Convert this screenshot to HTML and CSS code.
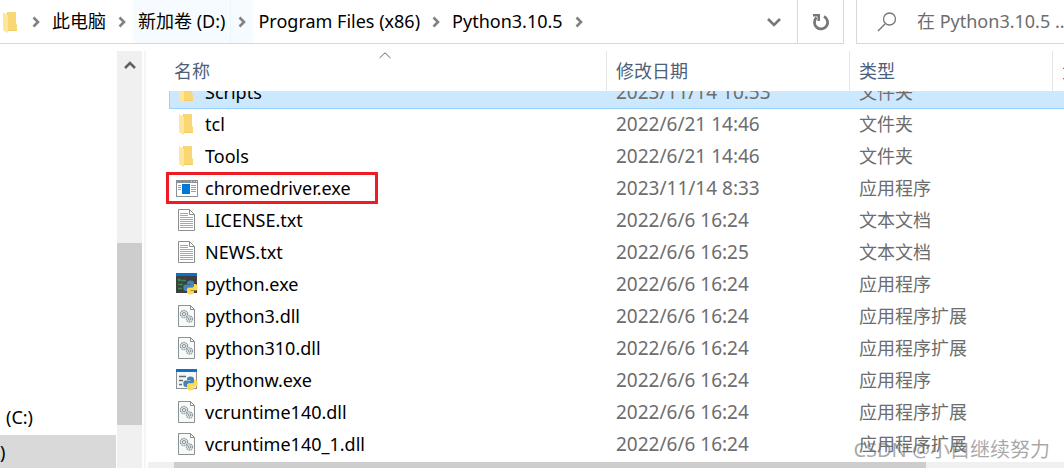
FILE: index.html
```
<!DOCTYPE html>
<html lang="zh-CN">
  <head>
    <meta charset="UTF-8" />
    <title>Python3.10.5</title>
    <link rel="stylesheet" href="styles.css" />
  </head>
  <body>
    <!-- Icons -->
    <svg class="sprite" width="0" height="0" aria-hidden="true">
      <symbol id="chevron" viewBox="0 0 8 12">
        <path d="M1.5 1.5 6 6 1.5 10.5" fill="none" stroke="#818181" stroke-width="2.6" />
      </symbol>
      <symbol id="folder" viewBox="0 0 22 22">
        <path d="M7 1h9v12l1 1v6H5z" fill="#f5cd62" />
        <path d="M8 1h8v12l1 1v5H8z" fill="#f8d775" />
        <path d="M3 1l5 3v18l-4-2-1-1z" fill="#ffe69b" />
      </symbol>
      <symbol id="app" viewBox="0 0 22 22">
        <rect x=".5" y="3.5" width="21" height="16" fill="#fff" stroke="#8b9094" />
        <rect x="0" y="3" width="22" height="3" fill="#8b9094" />
        <path d="M15 4.5h1M17.5 4.5h1M20 4.5h1" stroke="#e8eaeb" />
        <rect x="6" y="7" width="8" height="10" fill="#0078d7" />
        <path d="M2 8.5h3M2 10.5h3M2 12.5h3M15 8.5h5M15 10.5h5M15 12.5h5M15 14.5h5" stroke="#9a9fa3" />
      </symbol>
      <symbol id="text" viewBox="0 0 22 22">
        <path d="M2.5.5h11l5 5v16h-16z" fill="#fff" stroke="#8b8f91" />
        <path d="M13.5.5v5h5" fill="none" stroke="#8b8f91" />
        <path d="M4 4.5h8M4 6.5h8M4 8.5h13M4 10.5h13M4 12.5h13M4 14.5h13M4 16.5h13M4 18.5h13" stroke="#a3a7a9" />
      </symbol>
      <symbol id="dll" viewBox="0 0 22 22">
        <path d="M2.5.5h12l4 4v17h-16z" fill="#f8f9f9" stroke="#8b8f91" />
        <path d="M14.5.5v4h4" fill="none" stroke="#8b8f91" />
        <circle cx="8" cy="9" r="3.5" fill="none" stroke="#8d979f" stroke-width="1.5" stroke-dasharray="1.5 .7" />
        <circle cx="8" cy="9" r="1.7" fill="#dfe4e7" stroke="#8d979f" />
        <circle cx="13.5" cy="14" r="3" fill="none" stroke="#8d979f" stroke-width="1.4" stroke-dasharray="1.4 .7" />
        <circle cx="13.5" cy="14" r="1.3" fill="#dfe4e7" stroke="#8d979f" />
      </symbol>
      <symbol id="python" viewBox="0 0 22 22">
        <rect width="21" height="20" fill="#3c4043" />
        <rect width="21" height="3" fill="#0a70c8" />
        <path d="M2 6l2 1-2 1M5 7.5h5M2 11.5h5M2 15.5h4" fill="none" stroke="#398b43" stroke-width="1.5" />
        <g transform="translate(7 7)">
          <path d="M4 3Q4 .5 7.500 .5T11 3v3Q11 7.500 9.500 7.500H6Q4 7.500 4 9.500v1.500H3Q.3 11 .3 7.500T3 4.500h4.500V4H4z" fill="#4584b6" />
          <path d="M4 3Q4 .5 7.500 .5T11 3v3Q11 7.500 9.500 7.500H6Q4 7.500 4 9.500v1.500H3Q.3 11 .3 7.500T3 4.500h4.500V4H4z" fill="#ffd94a" transform="rotate(180 7.5 7.5)" />
        </g>
      </symbol>
      <symbol id="pythonw" viewBox="0 0 22 22">
        <rect x=".5" y=".5" width="20" height="19" fill="#f5f6f7" stroke="#8b9094" />
        <rect width="21" height="3" fill="#0a70c8" />
        <path d="M3 7.5h7M3 11.5h4M3 15.5h3" stroke="#646a70" stroke-width="1.5" />
        <g transform="translate(7 7)">
          <path d="M4 3Q4 .5 7.500 .5T11 3v3Q11 7.500 9.500 7.500H6Q4 7.500 4 9.500v1.500H3Q.3 11 .3 7.500T3 4.500h4.500V4H4z" fill="#4584b6" />
          <path d="M4 3Q4 .5 7.500 .5T11 3v3Q11 7.500 9.500 7.500H6Q4 7.500 4 9.500v1.500H3Q.3 11 .3 7.500T3 4.500h4.500V4H4z" fill="#ffd94a" transform="rotate(180 7.5 7.5)" />
        </g>
      </symbol>
    </svg>

    <!-- Address bar -->
    <header class="toolbar">
      <nav class="address">
        <svg class="icon address-icon"><use href="#folder" /></svg>
        <svg class="chevron"><use href="#chevron" /></svg>
        <button class="crumb">此电脑</button>
        <svg class="chevron"><use href="#chevron" /></svg>
        <span class="crumb-hover">
          <button class="crumb">新加卷 (D:)</button>
          <svg class="chevron"><use href="#chevron" /></svg>
        </span>
        <button class="crumb">Program Files (x86)</button>
        <svg class="chevron"><use href="#chevron" /></svg>
        <button class="crumb">Python3.10.5</button>
        <svg class="chevron"><use href="#chevron" /></svg>
        <button class="tool history" aria-label="历史记录">
          <svg width="14" height="10" viewBox="0 0 14 10">
            <path d="M1 2l6 6 6-6" fill="none" stroke="#777" stroke-width="2.6" />
          </svg>
        </button>
        <button class="tool refresh" aria-label="刷新">
          <svg width="18" height="18" viewBox="0 0 18 18">
            <path d="M12 3.4A6.6 6.6 0 1 1 4.5 4.5" fill="none" stroke="#777" stroke-width="2.8" />
            <path d="M1 1h7v7H5.5V3.5H1z" fill="#777" />
          </svg>
        </button>
      </nav>
      <label class="search">
        <svg width="20" height="20" viewBox="0 0 20 20" aria-hidden="true">
          <path d="M1 19l7-7" stroke="#777" stroke-width="1.5" />
          <circle cx="12.5" cy="7" r="6" fill="none" stroke="#777" stroke-width="1.3" />
        </svg>
        <input type="text" placeholder="在 Python3.10.5 ..." aria-label="搜索" />
      </label>
    </header>

    <main class="explorer">
      <!-- Drive tree -->
      <aside class="tree">
        <a class="tree-item" href="#">(C:)</a>
        <a class="tree-item tree-current" href="#">)</a>
      </aside>
      <div class="scroll-y">
        <svg width="12" height="9" viewBox="0 0 12 9">
          <path d="M1 7l5-5 5 5" fill="none" stroke="#606060" stroke-width="2.5" />
        </svg>
        <div class="thumb-y"></div>
      </div>
      <div class="splitter"></div>

      <!-- File list -->
      <section class="files">
        <table>
          <thead>
            <tr>
              <th>
                名称
                <svg class="sort" width="12" height="7" viewBox="0 0 12 7">
                  <path d="M.5 6 6 .8 11.5 6" fill="none" stroke="#666" />
                </svg>
              </th>
              <th>修改日期</th>
              <th>类型</th>
              <th>大小</th>
            </tr>
          </thead>
          <tbody>
            <tr class="selected">
              <td><svg class="icon"><use href="#folder" /></svg>Scripts</td>
              <td class="date">2023/11/14 10:53</td>
              <td>文件夹</td>
            </tr>
            <tr>
              <td><svg class="icon"><use href="#folder" /></svg>tcl</td>
              <td class="date">2022/6/21 14:46</td>
              <td>文件夹</td>
            </tr>
            <tr>
              <td><svg class="icon"><use href="#folder" /></svg>Tools</td>
              <td class="date">2022/6/21 14:46</td>
              <td>文件夹</td>
            </tr>
            <tr class="marked">
              <td><svg class="icon"><use href="#app" /></svg>chromedriver.exe</td>
              <td class="date">2023/11/14 8:33</td>
              <td>应用程序</td>
            </tr>
            <tr>
              <td><svg class="icon"><use href="#text" /></svg>LICENSE.txt</td>
              <td class="date">2022/6/6 16:24</td>
              <td>文本文档</td>
            </tr>
            <tr>
              <td><svg class="icon"><use href="#text" /></svg>NEWS.txt</td>
              <td class="date">2022/6/6 16:25</td>
              <td>文本文档</td>
            </tr>
            <tr>
              <td><svg class="icon"><use href="#python" /></svg>python.exe</td>
              <td class="date">2022/6/6 16:24</td>
              <td>应用程序</td>
            </tr>
            <tr>
              <td><svg class="icon"><use href="#dll" /></svg>python3.dll</td>
              <td class="date">2022/6/6 16:24</td>
              <td>应用程序扩展</td>
            </tr>
            <tr>
              <td><svg class="icon"><use href="#dll" /></svg>python310.dll</td>
              <td class="date">2022/6/6 16:24</td>
              <td>应用程序扩展</td>
            </tr>
            <tr>
              <td><svg class="icon"><use href="#pythonw" /></svg>pythonw.exe</td>
              <td class="date">2022/6/6 16:24</td>
              <td>应用程序</td>
            </tr>
            <tr>
              <td><svg class="icon"><use href="#dll" /></svg>vcruntime140.dll</td>
              <td class="date">2022/6/6 16:24</td>
              <td>应用程序扩展</td>
            </tr>
            <tr>
              <td><svg class="icon"><use href="#dll" /></svg>vcruntime140_1.dll</td>
              <td class="date">2022/6/6 16:24</td>
              <td>应用程序扩展</td>
            </tr>
          </tbody>
        </table>
        <div class="scroll-x"><div class="thumb-x"></div></div>
      </section>
    </main>
    <div class="watermark">CSDN @小白继续努力</div>
  </body>
</html>
```
FILE: styles.css
```
*,
*::before {
  box-sizing: border-box;
}
body {
  margin: 0;
  height: 100vh;
  display: flex;
  flex-direction: column;
  overflow: hidden;
  background: #fff;
  color: #000;
  font-family: "Noto Sans", "Noto Sans CJK SC", sans-serif;
  font-size: 18px;
  line-height: 24px;
}
button,
input {
  font: inherit;
  color: inherit;
  background: none;
  border: 0;
  padding: 0;
}
.sprite {
  position: absolute;
}
.icon {
  width: 22px;
  height: 22px;
  flex: none;
}

/* Address bar */
.toolbar {
  display: flex;
  gap: 12px;
  height: 44px;
  flex: none;
}
.address {
  flex: 1;
  display: flex;
  align-items: center;
  border: solid #d9d9d9;
  border-width: 0 1px 1px 0;
}
.address-icon {
  margin-right: 3px;
}
.chevron {
  width: 22px;
  height: 12px;
  flex: none;
}
.crumb {
  padding: 0 5px 2px;
  height: 100%;
  white-space: nowrap;
}
.crumb-hover {
  display: flex;
  align-items: center;
  align-self: stretch;
  background: #f6fbff;
}
.crumb-hover .crumb {
  border-right: 1px solid #edf5fc;
}
.tool {
  width: 46px;
  height: 100%;
  display: flex;
  align-items: center;
  justify-content: center;
}
.history {
  margin-left: auto;
}
.refresh {
  border-left: 1px solid #d9d9d9;
}
.search {
  width: 208px;
  display: flex;
  align-items: center;
  gap: 20px;
  padding-left: 20px;
  border: solid #d9d9d9;
  border-width: 0 0 1px 1px;
  color: #6d6d6d;
}
.search svg {
  flex: none;
}
.search input {
  flex: 1;
  min-width: 0;
  padding-bottom: 2px;
}
.search input::placeholder {
  color: #6d6d6d;
}

/* Panes */
.explorer {
  flex: 1;
  display: flex;
  min-height: 0;
  padding-top: 7px;
}
.tree {
  width: 116px;
  margin-right: 1px;
  display: flex;
  flex-direction: column;
  justify-content: flex-end;
}
.tree-item {
  padding: 2px 6px 6px;
  color: #000;
  text-decoration: none;
}
.tree-current {
  padding: 5px 0 4px;
  background: #d9d9d9;
}
.scroll-y {
  width: 25px;
  display: flex;
  flex-direction: column;
  align-items: center;
  padding: 10px 0 43px;
  background: #f0f0f0;
}
.thumb-y {
  width: 100%;
  height: 182px;
  margin-top: auto;
  background: #cdcdcd;
}
.splitter {
  width: 2px;
  margin: 0 2px;
  background: #f5f5f5;
}

/* File list */
.files {
  flex: 1;
  min-width: 0;
  display: flex;
  flex-direction: column;
  overflow: hidden;
}
table,
thead,
tbody {
  display: block;
}
table {
  flex: 1;
}
tr {
  display: grid;
  grid-template-columns: 438px 243px 203px 1fr;
}
thead {
  position: relative;
  z-index: 1;
  padding-left: 21px;
  background: #fff;
}
th,
td {
  display: flex;
  align-items: center;
  white-space: nowrap;
}
th {
  height: 40px;
  padding: 0 0 0 9px;
  border-right: 1px solid #e5e5e5;
  color: #4c607a;
  font-weight: normal;
}
th:first-child {
  padding-left: 5px;
}
th:last-child {
  border-right: 0;
}
.sort {
  position: absolute;
  top: 1px;
  left: 231px;
}
/* The list is scrolled part of a row under the header */
tbody {
  margin: -14px 0 0 21px;
}
tbody tr {
  height: 32px;
  position: relative;
  border: 1px solid transparent;
  border-right: 0;
}
td {
  padding: 0 0 2px 8px;
  color: #6d6d6d;
}
td:first-child {
  gap: 7px;
  padding-left: 6px;
  color: #000;
}
.date {
  font-size: 19px;
}
.selected {
  background: #cce8ff;
  border-color: #99d1ff;
}
.marked::before {
  content: "";
  position: absolute;
  left: -4px;
  top: -2px;
  width: 212px;
  height: 32px;
  border: 3px solid #ed1c24;
}
.scroll-x {
  height: 6px;
  flex: none;
  padding: 0 138px 0 26px;
  background: #f0f0f0;
}
.thumb-x {
  height: 100%;
  background: #cdcdcd;
}
.watermark {
  position: absolute;
  right: 14px;
  bottom: 6px;
  color: rgba(110, 110, 110, 0.6);
  font-size: 20px;
}
```
